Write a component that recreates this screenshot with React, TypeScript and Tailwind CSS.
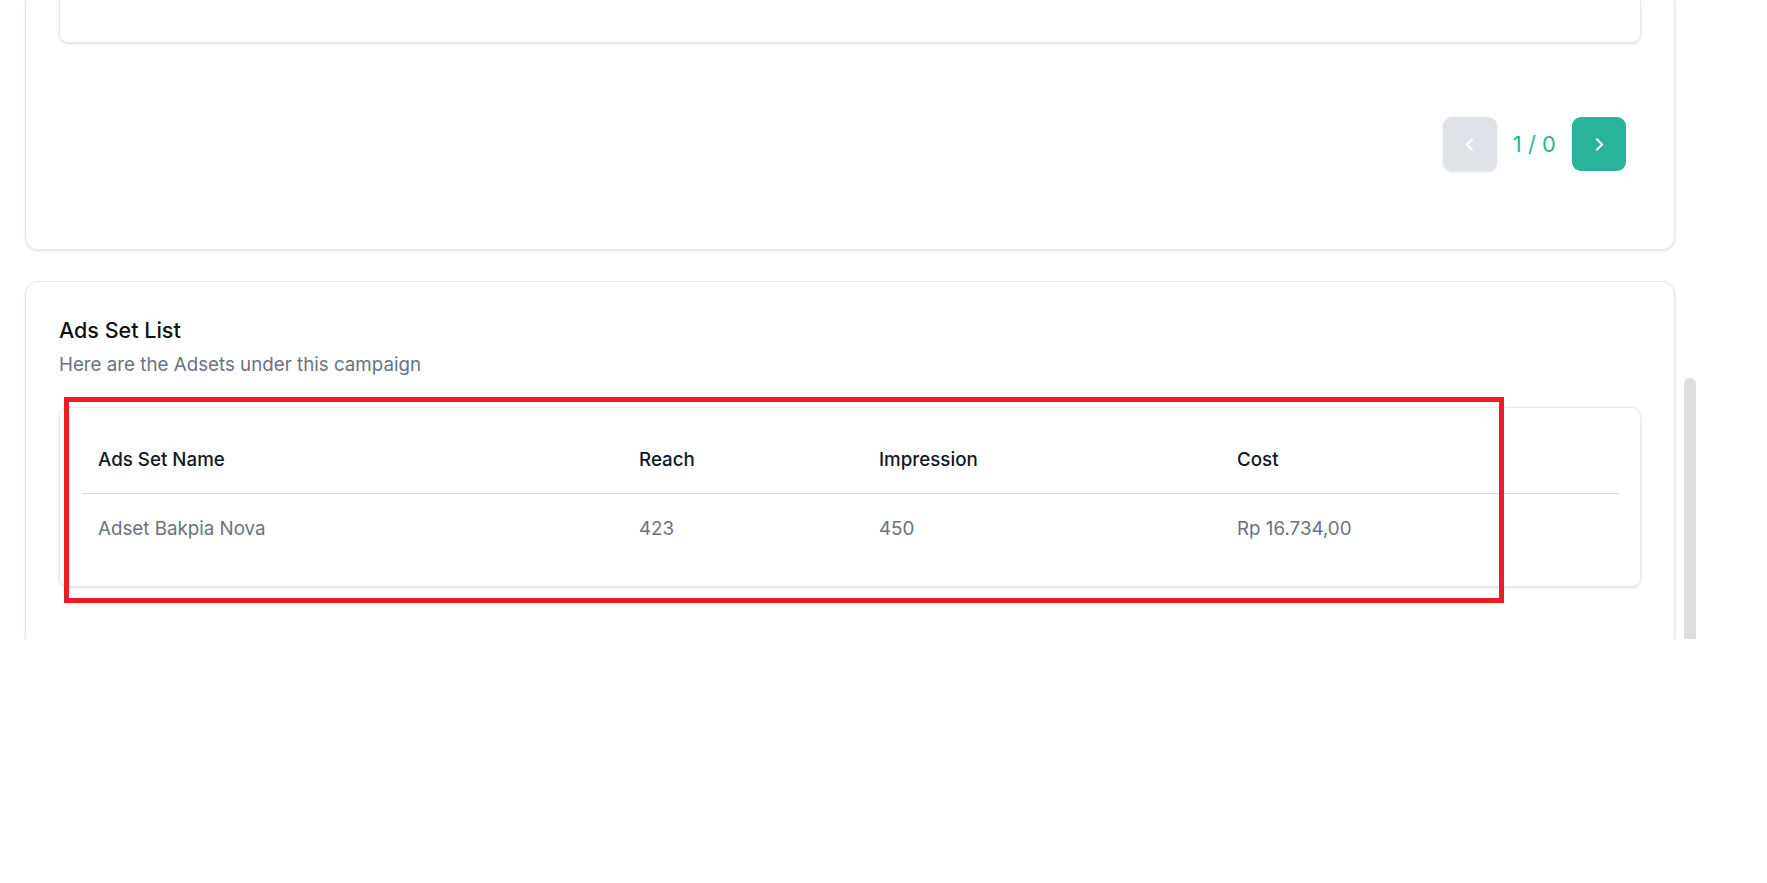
import React from 'react';
import { ChevronLeft, ChevronRight } from 'lucide-react';

interface AdSet {
  name: string;
  reach: number;
  impression: number;
  cost: string;
}

const adSets: AdSet[] = [
  { name: 'Adset Bakpia Nova', reach: 423, impression: 450, cost: 'Rp 16.734,00' }
];

const Pagination: React.FC = () => (
  <div className="flex items-center justify-end pr-[15px]">
    <button className="flex h-[54px] w-[54px] items-center justify-center rounded-[9px] bg-[#dfe2e6] text-white shadow-sm">
      <ChevronLeft size={21} strokeWidth={2.25} />
    </button>
    <span className="mx-[16px] text-[22px] leading-[28px] text-[#2bb39a]">1 / 0</span>
    <button className="flex h-[54px] w-[54px] items-center justify-center rounded-[9px] bg-[#29b399] text-white">
      <ChevronRight size={21} strokeWidth={2.25} />
    </button>
  </div>
);

const AdSetTable: React.FC = () => (
  <div className="mt-[29px] rounded-[9px] border border-[#e7e8eb] p-[22px] shadow-sm">
    <table className="w-full table-fixed border-collapse text-left">
      <thead>
        <tr className="border-b border-[#d7d9dd]">
          <th className="w-[539px] pt-[16px] pb-[19px] pl-[16px] text-[18.75px] leading-[28px] font-medium text-[#111827]">Ads Set Name</th>
          <th className="w-[240px] pt-[16px] pb-[19px] pl-[18px] text-[18.75px] leading-[28px] font-medium text-[#111827]">Reach</th>
          <th className="w-[358px] pt-[16px] pb-[19px] pl-[18px] text-[18.75px] leading-[28px] font-medium text-[#111827]">Impression</th>
          <th className="pt-[16px] pb-[19px] pl-[18px] text-[18.75px] leading-[28px] font-medium text-[#111827]">Cost</th>
        </tr>
      </thead>
      <tbody>
        {adSets.map((row) => (
          <tr key={row.name}>
            <td className="py-[21px] pl-[16px] text-[18.75px] leading-[28px] text-[#6b7280]">{row.name}</td>
            <td className="py-[21px] pl-[18px] text-[18.75px] leading-[28px] text-[#6b7280]">{row.reach}</td>
            <td className="py-[21px] pl-[18px] text-[18.75px] leading-[28px] text-[#6b7280]">{row.impression}</td>
            <td className="py-[21px] pl-[18px] text-[18.75px] leading-[28px] text-[#6b7280]">{row.cost}</td>
          </tr>
        ))}
      </tbody>
    </table>
  </div>
);

export default function App() {
  return (
    <div className="h-[883px] w-[1767px] overflow-hidden bg-white" style={{ fontFamily: 'Inter, "Noto Sans", sans-serif' }}>
      <div className="relative h-[639px] w-[1700px] overflow-hidden">
        <div className="flex w-[1675px] flex-col gap-[31px] pl-[25px]">
          {/* campaign list card, top part scrolled away */}
          <div className="rounded-b-[13px] border border-t-0 border-[#e5e7eb] px-[33px] pb-[78px] shadow-sm">
            <div className="h-[43px] rounded-b-[9px] border border-t-0 border-[#e7e8eb] shadow-sm" />
            <div className="mt-[74px]">
              <Pagination />
            </div>
          </div>

          {/* ads set list */}
          <div className="rounded-[13px] border border-[#e5e7eb] px-[33px] pt-[34px] pb-[80px] shadow-sm">
            <h2 className="text-[21.5px] leading-[28px] font-medium text-[#111111]">Ads Set List</h2>
            <p className="mt-[7px] text-[18.75px] leading-[27px] text-[#6b7280]">Here are the Adsets under this campaign</p>
            <AdSetTable />
          </div>
        </div>

        {/* scrollbar thumb */}
        <div className="absolute left-[1684px] top-[378px] h-[300px] w-[12px] rounded-full bg-[#dedede]" />

        {/* annotation */}
        <div className="pointer-events-none absolute left-[64px] top-[397px] h-[206px] w-[1440px] border-[5px] border-[#ed1c24]" />
      </div>
    </div>
  );
}
